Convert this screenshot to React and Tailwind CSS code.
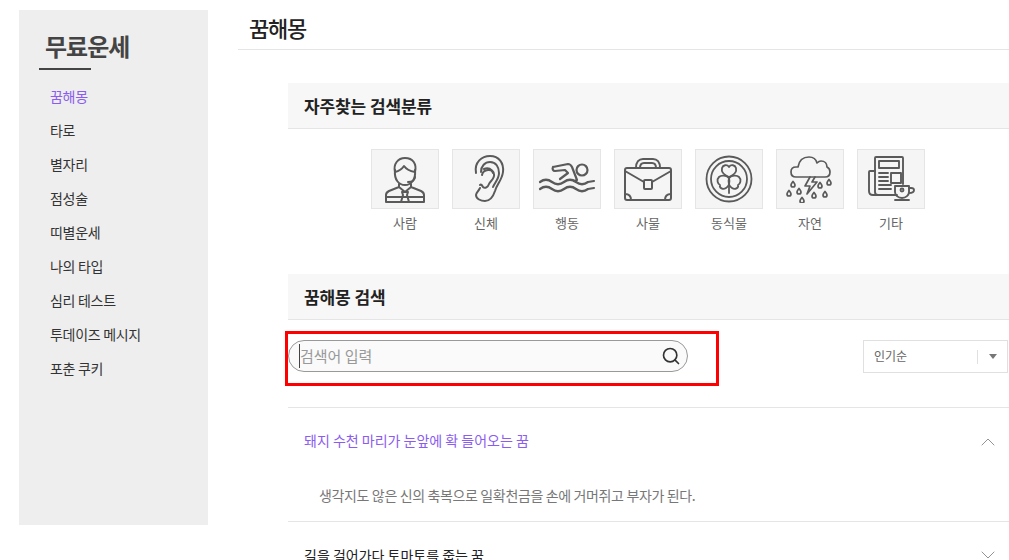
import React from 'react';
import { ChevronUp, ChevronDown, Search } from 'lucide-react';

const menuItems = ['꿈해몽', '타로', '별자리', '점성술', '띠별운세', '나의 타입', '심리 테스트', '투데이즈 메시지', '포춘 쿠키'];

const PersonIcon = () => (
  <svg viewBox="0 0 48 48" className="w-12 h-12" fill="none" stroke="#5a5a5a" strokeWidth="2" strokeLinecap="round" strokeLinejoin="round">
    <path d="M14 17c-2-8 3-14 10-14 8 0 12 6 10 14" />
    <path d="M14 17c4-1 7-3 9-6 2 3 6 5 11 6" />
    <path d="M14 15c-1 10 4 15 10 15 6 0 11-5 10-15" />
    <path d="M34 22c0 3-3 5-7 5" />
    <path d="M18 29v3L8 36c-2 1-3 2-3 4v7h38v-7c0-2-1-3-3-4l-10-4v-3" />
    <path d="M18 32l6 5 6-5" />
    <path d="M21 37h6l-1 3 2 7h-8l2-7z" />
    <path d="M5 42h38" />
  </svg>
);

const EarIcon = () => (
  <svg viewBox="0 0 48 48" className="w-12 h-12" fill="none" stroke="#5a5a5a" strokeWidth="2" strokeLinecap="round" strokeLinejoin="round">
    <path d="M14 18C12 7 20 1 28 1c9 0 14 7 13 16-1 8-6 12-8 19-2 6-5 10-10 10-4 0-9-2-9-6 0-2 2-3 4-7" />
    <path d="M19 17c0-6 4-10 9-10 6 0 9 5 9 11 0 6-4 9-6 14" />
    <path d="M20 20c1-6 11-7 12-1 1 5-4 7-5 10-1 3-4 5-6 3-1-2-2-3-3-2" />
    <path d="M22 14c4-2 8 0 9 4" />
  </svg>
);

const SwimIcon = () => (
  <svg viewBox="0 0 58 48" className="w-[58px] h-12" fill="none" stroke="#5a5a5a" strokeWidth="2.200" strokeLinecap="round" strokeLinejoin="round">
    <circle cx="44" cy="15" r="5.500" />
    <path d="M15 12l15-3c2 0 3 1 4 3l5 13M15 12c-1 2 0 4 2 4l10-1 3 3-8 6M39 25l-3 1" />
    <path d="M2 27c4-3 8-3 12 0s8 3 12 0 8-3 12 0 8 3 12 0l6-1" />
    <path d="M2 34c4-3 8-3 12 0s8 3 12 0 8-3 12 0 8 3 12 0l6-1" />
  </svg>
);

const BagIcon = () => (
  <svg viewBox="0 0 48 48" className="w-12 h-12" fill="none" stroke="#5a5a5a" strokeWidth="2" strokeLinecap="round" strokeLinejoin="round">
    <rect x="1" y="13" width="46" height="32" rx="2" />
    <path d="M12 13c0-6 3-9 7-9h10c4 0 7 3 7 9M16 13c0-3 1-5 4-5h8c3 0 4 2 4 5" />
    <path d="M1 16l19 11M47 16L28 27" />
    <rect x="20" y="25" width="8" height="9" rx="1" />
    <path d="M1 39c4 0 6 2 6 6M47 39c-4 0-6 2-6 6" />
  </svg>
);

const CloverIcon = () => (
  <svg viewBox="0 0 48 48" className="w-12 h-12" fill="none" stroke="#5a5a5a" strokeWidth="1.800" strokeLinecap="round" strokeLinejoin="round">
    <circle cx="24" cy="24" r="22.500" />
    <circle cx="24" cy="24" r="18" />
    <path d="M24 22c-5-2-8-5-7-9 1-3 5-4 7-1 2-3 6-2 7 1 1 4-2 7-7 9z" />
    <path d="M24 23c-3-3-8-3-10-1-3 3-1 7 1 8-1 3 3 5 6 3 3-2 4-6 3-10z" />
    <path d="M24 23c3-3 8-3 10-1 3 3 1 7-1 8 1 3-3 5-6 3-3-2-4-6-3-10z" />
    <path d="M24 23v15" />
  </svg>
);

const Drop = ({ x, y }) => (
  <path d={`M${x} ${y - 2.5}c-1 1.500-2 2.500-2 3.500s1 2 2 2 2-1 2-2-1-2-2-3.500z`} />
);

const RainIcon = () => (
  <svg viewBox="0 0 48 48" className="w-12 h-12" fill="none" stroke="#5a5a5a" strokeWidth="1.700" strokeLinecap="round" strokeLinejoin="round">
    <path d="M10 22c-3 0-5-2-5-5s2-5 5-5h2c1-6 5-10 11-10 4 0 7 2 8 6 1-1 3-2 4-2 4 0 6 3 6 6 2 1 3 3 3 5 0 3-2 5-5 5z" />
    <path d="M24 22l-5 9h5l-3 8 10-12h-5l3-5" />
    <Drop x={7} y={29} />
    <Drop x={34} y={30} />
    <Drop x={43} y={27} />
    <Drop x={3} y={38} />
    <Drop x={13} y={36} />
    <Drop x={28} y={40} />
    <Drop x={39} y={39} />
    <Drop x={16} y={45} />
  </svg>
);

const NewsIcon = () => (
  <svg viewBox="0 0 48 48" className="w-12 h-12" fill="none" stroke="#5a5a5a" strokeWidth="1.900" strokeLinecap="round" strokeLinejoin="round">
    <path d="M30 40H11c-2 0-3-1-3-3V3c0-1 1-1 1-1h26c1 0 1 1 1 1v26" />
    <path d="M8 16H3c-1 0-1 1-1 1v19c0 3 2 4 4 4h5" />
    <rect x="12" y="6" width="20" height="7" />
    <path d="M12 18h9M12 22h9M12 26h9M12 30h12M12 34h12" />
    <rect x="24" y="18" width="10" height="10" />
    <path d="M28 31h14v6c0 3-3 6-7 6s-7-3-7-6z" />
    <path d="M42 33h2c2 0 3 1 3 2s-1 3-5 3" />
    <path d="M28 45h14" />
    <circle cx="35" cy="35" r="1.500" />
  </svg>
);

const categories = [
  { label: '사람', Icon: PersonIcon },
  { label: '신체', Icon: EarIcon },
  { label: '행동', Icon: SwimIcon },
  { label: '사물', Icon: BagIcon },
  { label: '동식물', Icon: CloverIcon },
  { label: '자연', Icon: RainIcon },
  { label: '기타', Icon: NewsIcon },
];

const SectionTitle = ({ children }) => (
  <h3 className="h-[46px] bg-[#f7f7f7] border-b border-[#e5e5e5] pl-[16px] flex items-center text-[17px] font-bold tracking-[-0.1px] text-[#222]">
    {children}
  </h3>
);

export default function App() {
  return (
    <div className="relative h-[560px] w-[1009px] overflow-hidden bg-white flex items-start pl-[19px] pt-[10px] font-['Noto_Sans_CJK_KR','Noto_Sans',sans-serif] tracking-[-0.5px]">
      {/* Sidebar */}
      <aside className="w-[189px] h-[515px] shrink-0 bg-[#eeeeee] pt-[18px]">
        <h2 className="pl-[26px] text-[24px] leading-[36px] font-bold tracking-[-1px] text-[#444]">무료운세</h2>
        <div className="ml-[20px] mt-[4px] w-[52px] h-[2px] bg-[#444]"></div>
        <ul className="mt-[9px] pl-[31px] tracking-[-0.3px]">
          {menuItems.map((item, i) => (
            <li key={item} className={`h-[34px] flex items-center text-[14px] ${i === 0 ? 'text-[#8a5cf0]' : 'text-[#333]'}`}>
              {item}
            </li>
          ))}
        </ul>
      </aside>

      {/* Main */}
      <main className="ml-[30px] flex-1 -mt-[10px]">
        <div className="h-[50px] border-b border-[#e5e5e5] pl-[11px] flex items-center pt-[5px]">
          <h1 className="text-[22px] font-medium tracking-[-1.3px] text-[#222]">꿈해몽</h1>
        </div>

        <div className="pl-[50px] pt-[33px]">
          <SectionTitle>자주찾는 검색분류</SectionTitle>
          <div className="flex justify-center gap-[13px] pt-[20px] pr-[2px]">
            {categories.map(({ label, Icon }) => (
              <div key={label} className="w-[68px] flex flex-col items-center">
                <div className="w-[68px] h-[60px] bg-[#f5f5f5] border border-[#e5e5e5] flex items-center justify-center">
                  <Icon />
                </div>
                <span className="mt-[4px] ml-[1px] text-[13px] leading-[20px] tracking-[0px] text-[#666]">{label}</span>
              </div>
            ))}
          </div>

          <div className="mt-[41px]">
            <SectionTitle>꿈해몽 검색</SectionTitle>
          </div>

          <div className="flex justify-between items-start pt-[20px] pr-[1px]">
            <div className="w-[400px] h-[32px] rounded-full border border-[#999] bg-[#fafafa] flex items-center pl-[10px] pr-[6px]">
              <span className="flex-1 border-l border-[#444] text-[15px] leading-[24px] tracking-[0px] text-[#999]">검색어 입력</span>
              <Search size={20} strokeWidth={2} className="text-[#333]" />
            </div>
            <div className="w-[145px] h-[33px] border border-[#e0e0e0] flex items-center pl-[10px] text-[12px] tracking-[0px] text-[#666]">
              <span className="flex-1 -mt-[1px]">인기순</span>
              <div className="w-px h-[14px] bg-[#e0e0e0]"></div>
              <div className="w-[29px] flex justify-center">
                <div className="w-0 h-0 border-l-[4px] border-r-[4px] border-t-[5px] border-l-transparent border-r-transparent border-t-[#777]"></div>
              </div>
            </div>
          </div>

          <div className="mt-[34px] border-t border-[#e5e5e5]">
            <div className="h-[65px] flex items-center justify-between pl-[16px] pr-[9px] text-[14px] tracking-[0px] text-[#8a5cf0]">
              <span>돼지 수천 마리가 눈앞에 확 들어오는 꿈</span>
              <ChevronUp size={24} strokeWidth={0.8} className="text-[#777] mt-[3px]" />
            </div>
            <div className="h-[49px] pl-[31px] pt-[10px] text-[14px] leading-[24px] tracking-[-0.36px] text-[#777] border-b border-[#e5e5e5]">
              생각지도 않은 신의 축복으로 일확천금을 손에 거머쥐고 부자가 된다.
            </div>
            <div className="h-[66px] flex items-center justify-between pl-[16px] pr-[9px] text-[14px] tracking-[0px] text-[#222]">
              <span>길을 걸어가다 토마토를 줍는 꿈</span>
              <ChevronDown size={24} strokeWidth={0.8} className="text-[#777]" />
            </div>
          </div>
        </div>
      </main>

      {/* Red highlight over the search box */}
      <div className="absolute left-[285px] top-[331px] w-[434px] h-[55px] border-[3px] border-[#ff0000]"></div>
    </div>
  );
}
